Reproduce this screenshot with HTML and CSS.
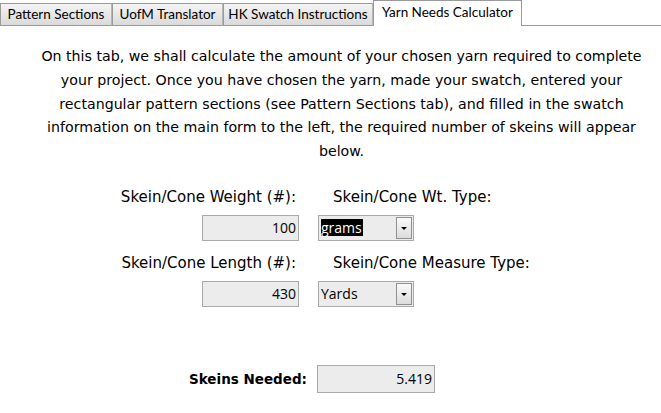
FILE: index.html
```html
<!DOCTYPE html>
<html lang="en">

<head>
    <meta charset="UTF-8">
    <title>Yarn Needs Calculator</title>
    <link rel="stylesheet" href="styles.css">
</head>

<body>
    <!-- tab strip -->
    <div class="tabs">
        <div class="tab tab-pattern">Pattern Sections</div>
        <div class="tab tab-uofm">UofM Translator</div>
        <div class="tab tab-hk">HK Swatch Instructions</div>
        <div class="tab tab-yarn active">Yarn Needs Calculator</div>
        <div class="tab-fill"></div>
    </div>

    <!-- tab page -->
    <main class="page">
        <p class="intro">On this tab, we shall calculate the amount of your chosen yarn required to complete<br>
            your project. Once you have chosen the yarn, made your swatch, entered your<br>
            rectangular pattern sections (see Pattern Sections tab), and filled in the swatch<br>
            information on the main form to the left, the required number of skeins will appear<br>
            below.</p>

        <div class="form">
            <div class="label label-left">Skein/Cone Weight (#):</div>
            <div class="label label-right">Skein/Cone Wt. Type:</div>
            <div class="field number">100</div>
            <div class="field combo"><span class="selected">grams</span><span class="drop"></span></div>

            <div class="label label-left row2">Skein/Cone Length (#):</div>
            <div class="label label-right row2">Skein/Cone Measure Type:</div>
            <div class="field number">430</div>
            <div class="field combo"><span class="value">Yards</span><span class="drop"></span></div>
        </div>

        <div class="result">
            <div class="result-label">Skeins Needed:</div>
            <div class="field number result-field">5.419</div>
        </div>
    </main>
</body>

</html>
```

FILE: styles.css
```css
:root {
    --tab-border: #9a9a9a;
    --field-bg: #ececec;
    --field-border: #a9a9a9;
}

body {
    margin: 0;
    background: #fff;
    color: #000;
    font-family: "Comic Sans MS", "DejaVu Sans", sans-serif;
}

/* tab strip */
.tabs {
    display: flex;
    align-items: flex-end;
    height: 26px;
    font-family: Lato, "Open Sans", sans-serif;
    font-size: 13.5px;
}

.tab {
    box-sizing: border-box;
    height: 23px;
    padding-top: 2px;
    text-align: center;
    border: 1px solid var(--tab-border);
    border-right-color: #b5b5b5;
    background: linear-gradient(#f4f4f4, #dadada);
    color: #000;
}

.tab-pattern { width: 112px; }
.tab-uofm { width: 111px; }
.tab-hk { width: 150px; }

.tab.active {
    width: 149px;
    height: 26px;
    padding-top: 3px;
    background: #fff;
    border-color: var(--tab-border);
    border-bottom: none;
}

.tab-fill {
    flex: 1;
    border-bottom: 1px solid var(--tab-border);
}

/* page content */
.intro {
    margin: 19px 6px 0 28px;
    font-size: 14.2px;
    line-height: 23.75px;
    text-align: center;
    white-space: nowrap;
}

.form {
    display: grid;
    grid-template-columns: 299px 96px;
    column-gap: 19px;
    margin-top: 21px;
}

.label {
    font-size: 15px;
    line-height: 24px;
}

.label-left {
    text-align: right;
    padding-right: 3px;
}

.label-right {
    padding-left: 15px;
    white-space: nowrap;
}

.row2 {
    margin-top: 10px;
}

.field {
    box-sizing: border-box;
    height: 26px;
    margin-top: 6px;
    background: var(--field-bg);
    border: 1px solid var(--field-border);
    font-family: "Open Sans", "Noto Sans", sans-serif;
    font-size: 14px;
    line-height: 24px;
}

.number {
    width: 97px;
    justify-self: end;
    text-align: right;
    padding-right: 2px;
}

.combo {
    display: flex;
    align-items: center;
    padding-left: 2px;
    padding-right: 1px;
}

.combo .selected {
    background: #000;
    color: #fff;
    line-height: 17px;
    padding-right: 1px;
}

.combo .value {
    flex: none;
}

.drop {
    box-sizing: border-box;
    width: 16px;
    height: 22px;
    margin-left: auto;
    border: 1px solid #8f8f8f;
    background: linear-gradient(#fafafa, #dcdcdc);
    position: relative;
}

.drop::after {
    content: "";
    position: absolute;
    left: 4px;
    top: 9px;
    border-left: 3px solid transparent;
    border-right: 3px solid transparent;
    border-top: 3px solid #000;
}

.result {
    display: flex;
    align-items: center;
    margin-top: 58px;
}

.result-label {
    width: 307px;
    text-align: right;
    font-size: 13.5px;
    font-weight: bold;
}

.result-field {
    width: 118px;
    height: 28px;
    margin: 0 0 0 10px;
    line-height: 26px;
}
```
